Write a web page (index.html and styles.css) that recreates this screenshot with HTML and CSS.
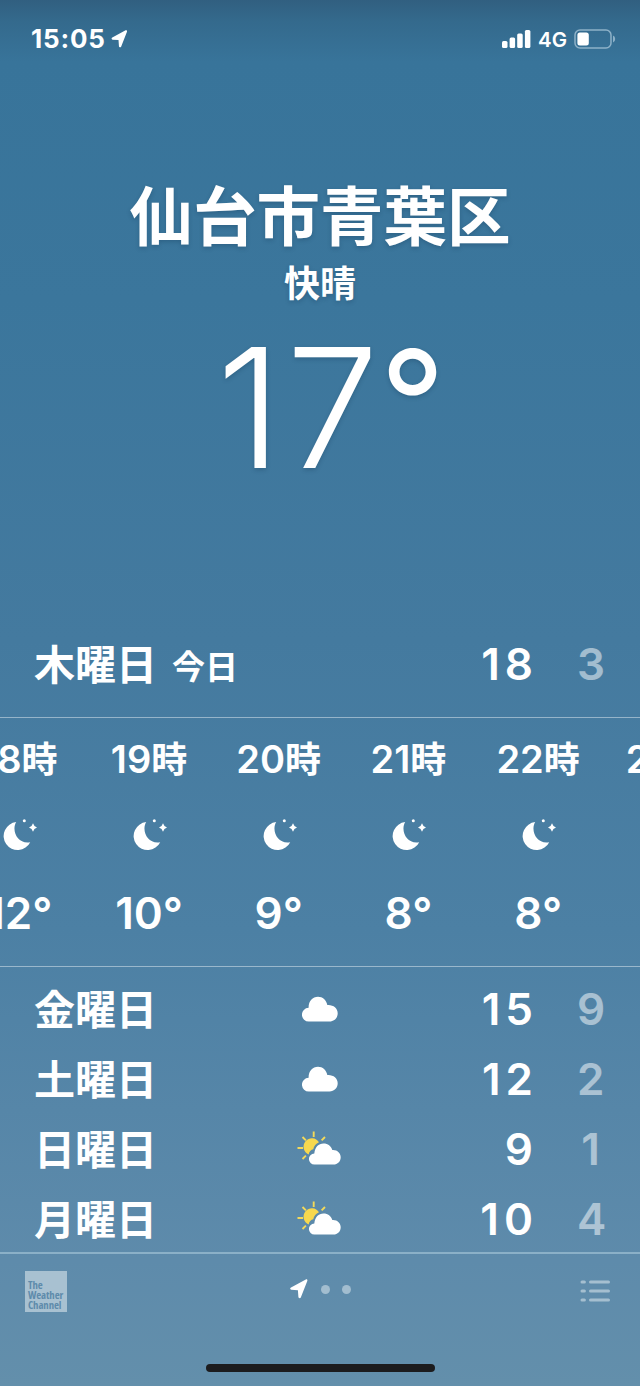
FILE: index.html
```html
<!DOCTYPE html>
<html lang="ja">
<head>
<meta charset="utf-8">
<title>天気</title>
<link rel="stylesheet" href="styles.css">
</head>
<body>
<svg class="defs" width="0" height="0" aria-hidden="true">
  <symbol id="moon" viewBox="0 0 36 34"><path d="M15.200 4.100A14 14 0 1 0 29.200 24.200C17 26.500 10 13 15.200 4.100Z"/><circle cx="23.300" cy="2.800" r="1.500"/><path d="M32 5.300q.9 3.300 4 4.200-3.100.9-4 4.200-.9-3.300-4-4.200 3.100-.9 4-4.200Z"/></symbol>
  <symbol id="cloud" viewBox="0 0 36 26"><path d="M7 25.500a6.800 6.800 0 0 1-.4-13.700C6.500 5 10.500.8 16 .8c4.700 0 8.400 3.400 9.300 8.300 5.800-.5 10.400 3.200 10.400 8.200 0 4.700-3.500 8.200-8.200 8.200Z"/></symbol>
  <symbol id="partly" viewBox="0 0 44 34">
    <g class="sun"><path d="M22 11.200A8.400 8.400 0 1 0 11.700 23.500C12 20.500 14 18.600 16.300 18.200 16.800 15 19 12.600 22 11.200Z"/><path class="rays" d="M16.700.5v5.500M.5 17h5.500M5.500 6l3.400 3.400M28 6l-3.400 3.400M5.500 28l3.400-3.400"/></g>
    <path d="M17.500 33.500a5.500 5.500 0 0 1-.2-11C18 16 21.500 12.500 26.500 12.500c4.500 0 7.500 2.600 8.800 6.500 4.900-.4 8.400 3 8.400 7.200 0 4.300-3.100 7.300-7.200 7.300Z"/>
  </symbol>
  <symbol id="arrow" viewBox="0 0 18 20"><path d="M15.800.4c1.100-.4 1.900.4 1.500 1.500L10.800 18.500c-.5 1.200-2.300.9-2.400-.4L7.900 11.200 1.300 10.700C0 10.600-.2 9 1 8.400Z"/></symbol>
</svg>
<div class="screen">
  <header class="status">
    <span class="clock">15:05</span>
    <svg class="status-arrow"><use href="#arrow"/></svg>
    <svg class="signal" viewBox="0 0 29 18"><rect x="0" y="11" width="5.500" height="7" rx="1.500"/><rect x="7.600" y="7.500" width="5.500" height="10.500" rx="1.500"/><rect x="15.200" y="3.500" width="5.500" height="14.500" rx="1.500"/><rect x="22.900" y="0" width="5.500" height="18" rx="1.500"/></svg>
    <span class="network">4G</span>
    <svg class="battery" viewBox="0 0 42 20"><rect class="shell" x="1" y="1" width="36" height="18" rx="5"/><rect x="3.400" y="3.500" width="11.400" height="13" rx="2.500"/><path class="cap" d="M39 6.500q2.200.8 2.200 3.500T39 13.500Z"/></svg>
  </header>
  <section class="current">
    <h1 class="place">仙台市青葉区</h1>
    <div class="condition">快晴</div>
    <div class="temperature">17<span class="ring">°</span></div>
  </section>
  <section class="row today"><span class="day">木曜日</span><span class="label">今日</span><span class="high">18</span><span class="low">3</span></section>
  <section class="hourly">
    <div class="hour"><div class="time">18<span class="ji">時</span></div><svg class="moon"><use href="#moon"/></svg><div class="degrees">12°</div></div>
    <div class="hour"><div class="time">19<span class="ji">時</span></div><svg class="moon"><use href="#moon"/></svg><div class="degrees">10°</div></div>
    <div class="hour"><div class="time">20<span class="ji">時</span></div><svg class="moon"><use href="#moon"/></svg><div class="degrees">9°</div></div>
    <div class="hour"><div class="time">21<span class="ji">時</span></div><svg class="moon"><use href="#moon"/></svg><div class="degrees">8°</div></div>
    <div class="hour"><div class="time">22<span class="ji">時</span></div><svg class="moon"><use href="#moon"/></svg><div class="degrees">8°</div></div>
    <div class="hour"><div class="time">23<span class="ji">時</span></div></div>
  </section>
  <section class="daily">
    <div class="row"><span class="day">金曜日</span><svg class="cloud"><use href="#cloud"/></svg><span class="high">15</span><span class="low">9</span></div>
    <div class="row"><span class="day">土曜日</span><svg class="cloud"><use href="#cloud"/></svg><span class="high">12</span><span class="low">2</span></div>
    <div class="row"><span class="day">日曜日</span><svg class="partly"><use href="#partly"/></svg><span class="high">9</span><span class="low">1</span></div>
    <div class="row"><span class="day">月曜日</span><svg class="partly"><use href="#partly"/></svg><span class="high">10</span><span class="low">4</span></div>
  </section>
  <footer class="toolbar">
    <div class="channel">The<br>Weather<br>Channel</div>
    <div class="pages"><svg class="page-arrow"><use href="#arrow"/></svg><i class="dot"></i><i class="dot"></i></div>
    <svg class="list" viewBox="0 0 30 22"><path d="M2 2h2.400M2 11h2.400M2 20h2.400M10.500 2h18M10.500 11h18M10.500 20h18"/></svg>
  </footer>
  <div class="home"></div>
</div>
</body>
</html>
```

FILE: styles.css
```css
* { box-sizing: border-box; }
body { margin: 0; }
.defs { display: block; height: 0; }
svg { display: block; fill: #fff; flex: none; }
.screen {
  width: 640px;
  height: 1386px;
  overflow: hidden;
  display: flex;
  flex-direction: column;
  color: #fff;
  font-family: Inter, "Noto Sans CJK JP", sans-serif;
  font-weight: 500;
  background: linear-gradient(#315f80 0, #346a8d 22px, #38749a 62px, #3b769c 300px, #447a9f 640px, #4c80a4 930px, #5686a8 1110px, #5e8bab 1260px, #638fab 1386px);
}
.status { height: 78px; flex: none; display: flex; align-items: center; padding: 0 24px 0 31px; }
.clock { font-size: 26px; font-weight: 700; width: 80px; white-space: nowrap; letter-spacing: .8px; margin-top: -1px; }
.status-arrow { width: 17px; height: 18px; }
.signal { width: 29px; height: 18px; margin-left: auto; }
.network { font-size: 20.500px; font-weight: 600; margin: 1px 0 0 7px; width: 36px; }
.battery { width: 42px; height: 20px; }
.shell { fill: none; stroke: #8db1c8; stroke-width: 1.500px; }
.cap { fill: #8db1c8; }
.current { height: 533px; flex: none; text-align: center; padding-top: 92px; text-shadow: 0 2px 4px rgba(20, 55, 85, .3); }
.place { margin: 0; font: 700 63.500px/84px "Noto Sans CJK JP", sans-serif; }
.condition { font: 700 36px/48px "Noto Sans CJK JP", sans-serif; padding-top: 3px; }
.temperature { font-size: 166px; line-height: 202px; font-weight: 300; padding: 2px 0 0 22px; letter-spacing: 4px; }
.ring { font-size: 144px; line-height: 0; font-weight: 400; letter-spacing: 0; vertical-align: 14px; margin-left: -3px; }
.row { height: 70px; display: grid; grid-template-columns: 137px 100px 1fr 72px; align-items: center; padding: 0 36px 0 34px; }
.day, .label { font-family: "Noto Sans CJK JP", sans-serif; font-weight: 700; white-space: nowrap; }
.day { font-size: 41px; line-height: 60px; padding-bottom: 5px; }
.label { font-size: 33px; line-height: 50px; padding: 1px 0 0 1px; }
.high, .low { font-size: 44px; line-height: 54px; padding-bottom: 1px; font-weight: 600; }
.high { text-align: right; letter-spacing: 5px; margin-right: -6px; }
.low { opacity: .5; text-align: center; margin: 0 0 0 45px; }
.today { height: 106px; flex: none; }
.hourly { height: 250px; flex: none; display: flex; margin-left: -45.500px; border: solid rgba(255, 255, 255, .43); border-width: 1px 0; }
.hour { width: 129.700px; flex: none; display: flex; flex-direction: column; align-items: center; padding-top: 13px; }
.time { height: 56px; font-size: 38px; line-height: 56px; font-weight: 600; white-space: nowrap; }
.ji { font: 700 36px/50px "Noto Sans CJK JP", sans-serif; }
.moon { width: 36px; height: 34px; margin-top: 31px; }
.degrees { font-size: 44px; line-height: 54px; font-weight: 600; margin-top: 34px; }
.daily { height: 287px; flex: none; padding-top: 7px; border-bottom: 2px solid #8bb0c7; }
.daily .row { grid-template-columns: 250px 70px 1fr 72px; }
.cloud { width: 36px; height: 26px; justify-self: center; margin-left: 2px; }
.partly { width: 44px; height: 34px; justify-self: center; margin-bottom: 2px; }
.sun { fill: #f7d84e; }
.rays { stroke: #f3d95a; stroke-width: 1.900px; }
.toolbar { height: 109px; flex: none; display: flex; justify-content: space-between; align-items: flex-start; padding: 17px 30px 0 25px; }
.channel { width: 42px; height: 41px; flex: none; background: #a8c1d1; color: #5e8bab; font: 700 10.800px/9.800px "Open Sans", sans-serif; font-stretch: 83%; letter-spacing: -.1px; padding: 9px 0 0 3px; white-space: nowrap; }
.pages { display: flex; align-items: center; gap: 12px; padding: 8px 7px 0 0; }
.page-arrow { width: 18px; height: 20px; margin-right: 1px; }
.dot { width: 9px; height: 9px; border-radius: 50%; background: #a2bdcf; }
.list { width: 30px; height: 22px; margin-top: 9px; stroke: #a5bfd0; stroke-width: 3px; stroke-linecap: round; }
.home { width: 229px; height: 8px; flex: none; border-radius: 4px; background: #1c1c1e; margin: 1px auto 0; }
```
